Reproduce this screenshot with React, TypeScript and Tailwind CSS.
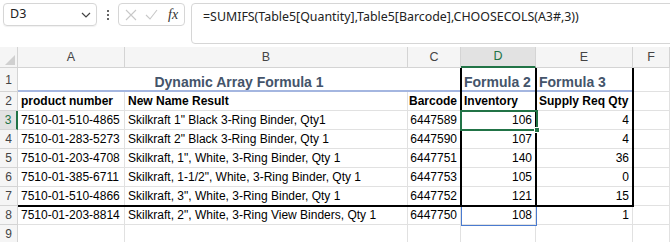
import React from "react";

const cols = ["A", "B", "C", "D", "E", "F"];

const rows = [
  ["7510-01-510-4865", 'Skilkraft 1" Black 3-Ring Binder, Qty1', "6447589", "106", "4"],
  ["7510-01-283-5273", 'Skilkraft 2" Black 3-Ring Binder, Qty 1', "6447590", "107", "4"],
  ["7510-01-203-4708", 'Skilkraft, 1", White, 3-Ring Binder, Qty 1', "6447751", "140", "36"],
  ["7510-01-385-6711", 'Skilkraft, 1-1/2", White, 3-Ring Binder, Qty 1', "6447753", "105", "0"],
  ["7510-01-510-4866", 'Skilkraft, 3", White, 3-Ring Binder, Qty 1', "6447752", "121", "15"],
  ["7510-01-203-8814", 'Skilkraft, 2", White, 3-Ring View Binders, Qty 1', "6447750", "108", "1"],
];

const cell = "border-r border-b border-[#e1e1e1] flex items-end pb-[2px] px-[3px] leading-[14px] whitespace-nowrap overflow-hidden";
const rowHead = "border-r border-b border-[#d4d4d4] bg-[#f5f5f5] flex items-center justify-center text-[#444] text-[12px]";

const Toolbar = () => (
  <div className="h-[47px] flex items-start pt-[3px] pl-[3px]">
    <div className="w-[94px] h-[23px] rounded-[4px] border border-[#d6d6d6] flex items-center justify-between pl-[6px] pr-[5px] text-[12.5px] text-[#222] shadow-[0_1px_1px_rgba(0,0,0,0.06)]">
      <span>D3</span>
      <svg width="10" height="6" viewBox="0 0 10 6" fill="none" stroke="#444" strokeWidth="1.2">
        <path d="M1 1l4 4 4-4" />
      </svg>
    </div>
    <div className="w-[21px] h-[23px] flex flex-col items-center justify-center gap-[2px]">
      <span className="w-[2px] h-[2px] bg-[#333] rounded-full" />
      <span className="w-[2px] h-[2px] bg-[#333] rounded-full" />
      <span className="w-[2px] h-[2px] bg-[#333] rounded-full" />
    </div>
    <div className="w-[67px] h-[23px] rounded-[4px] border border-[#d6d6d6] flex items-center pl-[6px] gap-[8px]">
      <svg width="12" height="12" viewBox="0 0 12 12" stroke="#c8c8c8" strokeWidth="1.1">
        <path d="M1 1l10 10M11 1L1 11" />
      </svg>
      <svg width="13" height="11" viewBox="0 0 13 11" fill="none" stroke="#c8c8c8" strokeWidth="1.1">
        <path d="M1 6l4 4 7-9" />
      </svg>
      <span className="text-[14px] italic text-[#333] font-['Liberation_Serif',serif] ml-[2px]">fx</span>
    </div>
    <div className="ml-[6px] flex-1 -mr-[4px] h-[41px] rounded-[4px] border border-[#d6d6d6] pl-[11px] pt-[4px] text-[12.4px] text-[#222] font-['Noto_Sans',sans-serif]">
      =SUMIFS(Table5[Quantity],Table5[Barcode],CHOOSECOLS(A3#,3))
    </div>
  </div>
);

const Grid = () => (
  <div className="relative grid grid-cols-[18px_107px_283px_53px_75px_97px_37px] grid-rows-[21px_24px_repeat(8,19px)] text-[12px] text-black font-['Liberation_Sans',sans-serif]">
    <div className="border-r border-b border-[#d4d4d4] bg-[#f5f5f5] flex items-end justify-end p-[2px]">
      <div className="w-0 h-0 border-l-[10px] border-l-transparent border-b-[10px] border-b-[#d0d0d0]" />
    </div>
    {cols.map((c) => (
      <div
        key={c}
        className={
          c === "D"
            ? "border-r border-b-2 border-r-[#d4d4d4] border-b-[#217346] bg-[#e2e2e2] flex items-center justify-center text-[#217346] text-[12.5px]"
            : "border-r border-b border-[#d4d4d4] bg-[#f5f5f5] flex items-center justify-center text-[#444] text-[12.5px]"
        }
      >
        {c}
      </div>
    ))}

    <div className={rowHead}>1</div>
    <div className={`${cell} col-span-3 justify-center font-bold text-[14px] text-[#44546a]`}>
      Dynamic Array Formula 1
    </div>
    <div className={`${cell} font-bold text-[14px] text-[#44546a]`}>Formula 2</div>
    <div className={`${cell} font-bold text-[14px] text-[#44546a]`}>Formula 3</div>
    <div className={cell} />

    <div className={rowHead}>2</div>
    <div className={`${cell} font-bold`}>product number</div>
    <div className={`${cell} font-bold`}>New Name Result</div>
    <div className={`${cell} font-bold justify-end`}>Barcode</div>
    <div className={`${cell} font-bold`}>Inventory</div>
    <div className={`${cell} font-bold`}>Supply Req Qty</div>
    <div className={cell} />

    {rows.map((r, i) => (
      <React.Fragment key={r[0]}>
        <div
          className={
            i === 0
              ? "border-r-2 border-b border-r-[#217346] border-b-[#d4d4d4] bg-[#e2e2e2] flex items-center justify-center text-[#217346] text-[12px]"
              : rowHead
          }
        >
          {i + 3}
        </div>
        <div className={cell}>{r[0]}</div>
        <div className={cell}>{r[1]}</div>
        <div className={`${cell} justify-end`}>{r[2]}</div>
        <div className={`${cell} justify-end`}>{r[3]}</div>
        <div className={`${cell} justify-end`}>{r[4]}</div>
        <div className={cell} />
      </React.Fragment>
    ))}

    <div className={rowHead}>9</div>
    {cols.map((c) => (
      <div key={c} className={cell} />
    ))}

    {/* title underline */}
    <div className="absolute left-[18px] top-[43px] w-[615px] h-[2px] bg-[#a4b6e0]" />
    {/* spill range */}
    <div className="absolute left-[461px] top-[64px] w-[76px] h-[115px] border border-[#4a7bd0]" />
    {/* table outline */}
    <div className="absolute left-[18px] top-[158px] w-[616px] h-[2px] bg-black" />
    <div className="absolute left-[460px] top-[21px] w-[2px] h-[139px] bg-black" />
    <div className="absolute left-[535px] top-[21px] w-[2px] h-[139px] bg-black" />
    <div className="absolute left-[632px] top-[21px] w-[2px] h-[139px] bg-black" />
    {/* active cell */}
    <div className="absolute left-[460px] top-[63px] w-[78px] h-[21px] border-2 border-[#217346]" />
    <div className="absolute left-[534px] top-[80px] w-[6px] h-[6px] bg-[#217346] border border-white" />
  </div>
);

export default function App() {
  return (
    <div className="w-[670px] h-[242px] overflow-hidden bg-white font-['Noto_Sans',sans-serif]">
      <Toolbar />
      <Grid />
    </div>
  );
}
